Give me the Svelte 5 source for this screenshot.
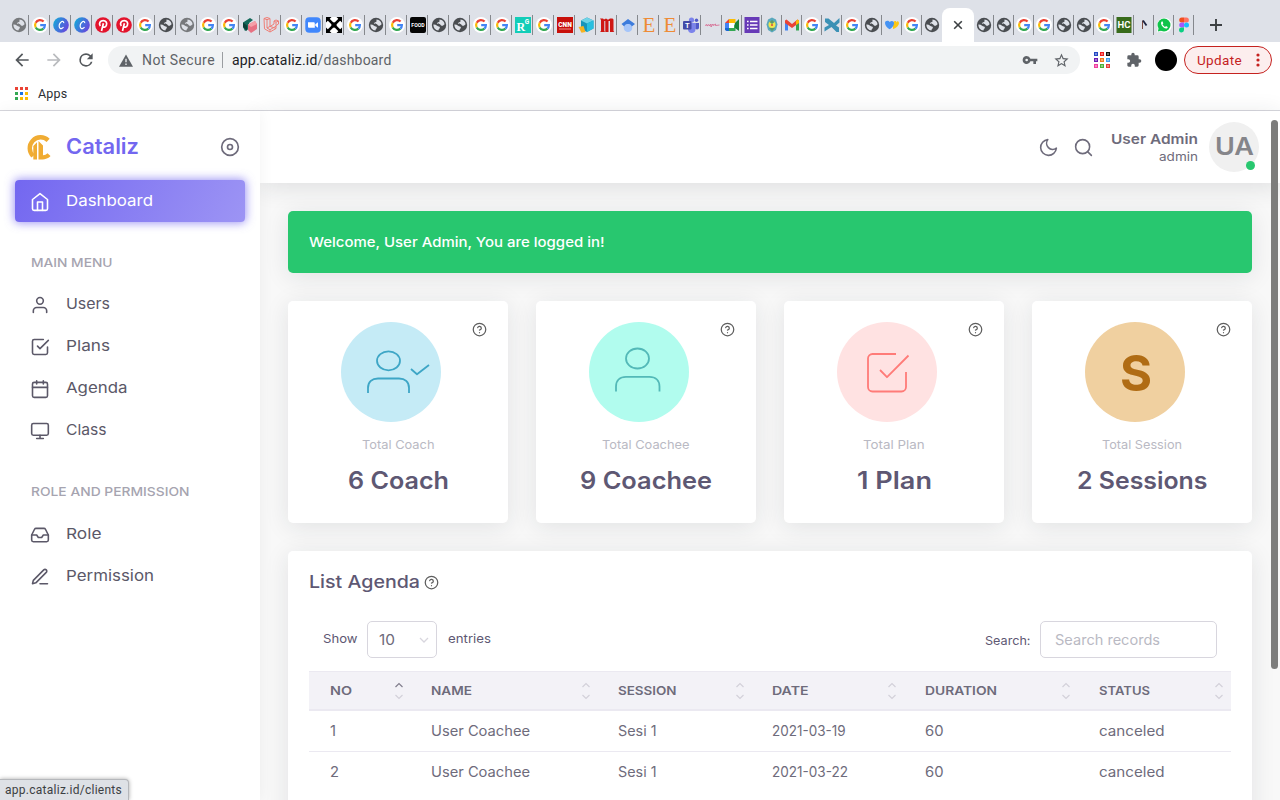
<script>
  // Letter-spaces a browser label to the given width.
  function track(node, width) {
    const natural = node.getBoundingClientRect().width;
    node.style.letterSpacing = `${(width - natural) / node.textContent.length}px`;
  }

  function fit(node, width) {
    const natural = node.getBoundingClientRect().width;
    node.style.width = `${width}px`;
    const inner = node.firstChild;
    const glyphs = document.createElement('span');
    glyphs.style.display = 'inline-block';
    glyphs.style.transformOrigin = 'left center';
    glyphs.style.transform = `scaleX(${width / natural})`;
    node.insertBefore(glyphs, inner);
    glyphs.appendChild(inner);
  }

  const wide = 'globeLight g canva canva pin pin g globe globeLight g g cube laravel g zoom cross g globe g food globe globe g g rg g cnn box m scholar etsy etsy teams script'.split(' ');
  const narrow = 'meet forms crest gmail g wave g globe hearts g globe'.split(' ');
  const after = 'globe globe g g globe globe g hc note whatsapp figma'.split(' ');

  const mainMenu = [
    { label: 'Users', icon: 'user', w: 44 },
    { label: 'Plans', icon: 'check', w: 44 },
    { label: 'Agenda', icon: 'calendar', w: 61.5 },
    { label: 'Class', icon: 'monitor', w: 40.5 }
  ];
  const roleMenu = [
    { label: 'Role', icon: 'inbox', w: 35.5 },
    { label: 'Permission', icon: 'edit', w: 88 }
  ];
  const cards = [
    { kind: 'coach', label: 'Total Coach', lw: 72.5, value: '6 Coach', vw: 101 },
    { kind: 'coachee', label: 'Total Coachee', lw: 87.5, value: '9 Coachee', vw: 132 },
    { kind: 'plan', label: 'Total Plan', lw: 61.5, value: '1 Plan', vw: 75 },
    { kind: 'session', label: 'Total Session', lw: 80, value: '2 Sessions', vw: 130.5 }
  ];
  const columns = [
    { label: 'NO', w: 22 },
    { label: 'NAME', w: 41 },
    { label: 'SESSION', w: 58.5 },
    { label: 'DATE', w: 36.5 },
    { label: 'DURATION', w: 72 },
    { label: 'STATUS', w: 51 }
  ];
  const rows = [
    [['1', 6], ['User Coachee', 99], ['Sesi 1', 38.5], ['2021-03-19', 73.5], ['60', 18.5], ['canceled', 65.5]],
    [['2', 9], ['User Coachee', 99], ['Sesi 1', 38.5], ['2021-03-22', 76], ['60', 18.5], ['canceled', 65.5]]
  ];
  const appDots = ['#ea4335', '#ea4335', '#ea4335', '#34a853', '#1a73e8', '#fbbc04', '#34a853', '#fbbc04', '#fbbc04'];
  const extDots = ['#2348c4', '#f01d1d', '#111111', '#6a1bb0', '#f07818', '#3c9cf0', '#f03ca0', '#4cb038', '#e83838'];
</script>

{#snippet fav(kind)}
  <svg class="fav" viewBox="0 0 16 16">
    {#if kind === 'g'}
      <circle cx="8" cy="8" r="8" fill="#fff" />
      <g fill="none" stroke-width="2.2">
        <path d="M11.6 4.6A4.9 4.9 0 0 0 3.7 5.7" stroke="#ea4335" />
        <path d="M3.7 5.7A4.9 4.9 0 0 0 3.7 10.4" stroke="#fbbc05" />
        <path d="M3.7 10.4A4.9 4.9 0 0 0 11.4 11.6" stroke="#34a853" />
        <path d="M11.4 11.6A4.9 4.9 0 0 0 12.9 8.2H8.2" stroke="#4285f4" />
      </g>
    {:else if kind === 'globe' || kind === 'globeLight'}
      <circle cx="8" cy="8" r="7.2" fill={kind === 'globe' ? '#4a4d51' : '#77797c'} />
      <path d="M8.6 2.4c2.8.2 4.8 2.3 5 4.9-.9.8-1.6 1.7-2.9 1.5-1.2-.2-.9-1.5-2.1-1.8-1-.2-2 .1-2.8-.7.7-1.2 2.2-.7 2.7-1.8.3-.8-.4-1.2.1-2.1zM2.4 7.6c1.5-.1 2.6.3 3.7 1.1 1 .8 2.7.3 2.8 1.7.1 1.2-1.4 1.1-1.5 3.2-2.9-.2-5.1-2.8-5-6z" fill="#dee1e8" />
    {:else if kind === 'canva'}
      <defs><linearGradient id="cv" x1="0" y1=".3" x2="1" y2=".8"><stop stop-color="#18a5d8" /><stop offset="1" stop-color="#6d3fdd" /></linearGradient></defs>
      <circle cx="8" cy="8" r="7.8" fill="url(#cv)" />
      <path d="M10.7 6.2c.3-1.6-1.2-2.3-2.6-1.3C6 6.3 5.500 10 7 11.200c1.100.9 2.600.1 3.500-1.200" fill="none" stroke="#fff" stroke-width="1.2" />
    {:else if kind === 'pin'}
      <circle cx="8" cy="8" r="7.8" fill="#e3142d" />
      <path d="M5.300 9c-2-2.800.1-5.300 2.900-5.300 2.700 0 4.100 2.100 3.200 4.500-.9 2.300-3.100 2.300-3.600 1M8.400 6.300L6.500 14" fill="none" stroke="#fff" stroke-width="1.7" />
    {:else if kind === 'cube'}
      <path d="M1 5.500L8 1l3 2-4 3v6L3 14 1 10z" fill="#14695a" /><path d="M1 5.500l4 3V14L1 10z" fill="#0d4039" />
      <path d="M6 7.500L13 4l2 3v5l-6 4-3-3z" fill="#e77283" /><path d="M6 7.500L13 4l2 3-6 3z" fill="#f5a0a8" />
    {:else if kind === 'laravel'}
      <path d="M1 1.500l3-1 3 1v8l4-2.500V4l2-1 2.500 1v3L13 8.500v3L7 15l-5.500-3.200zM1 1.500l3 1.200V11l3 1.700 6-3.500M4 2.700l3-1.200M11 4l2 1.200L15.500 4M13 5.200v3.300M4 11l3-1.600 6 2M7 12.700V15" fill="none" stroke="#ef7e76" stroke-width="1" />
    {:else if kind === 'zoom'}
      <rect x=".3" y=".3" width="15.4" height="15.4" rx="4" fill="#4087fc" />
      <path d="M3 5.300h5.500c.8 0 1.300.5 1.300 1.300v4.100H4.300C3.500 10.700 3 10.200 3 9.400zM10.300 7.300L13 5.300v5.400l-2.700-2z" fill="#fff" />
    {:else if kind === 'cross'}
      <path d="M0 0h16v16H0z" fill="#fff" />
      <path d="M2 2l12 12M14 2L2 14" stroke="#000" stroke-width="2.5" /><path d="M0 0h5.500L0 5.500zM16 0v5.500L10.500 0zM0 16v-5.500L5.500 16zM16 16h-5.500l5.500-5.500zM8 5l3 3-3 3-3-3z" />
    {:else if kind === 'food'}
      <rect width="16" height="16" rx="2" fill="#050505" />
      <text x="8" y="10" font-size="5.2" font-weight="700" text-anchor="middle" fill="#fff">FOOD</text>
    {:else if kind === 'rg'}
      <path d="M0 0h16v16H0z" fill="#12cdb8" />
      <text class="serif" x="1.5" y="13.5" font-size="12" font-weight="700" fill="#fff">R</text><text x="9.7" y="7" font-size="6.5" font-weight="700" fill="#fff">G</text>
    {:else if kind === 'cnn'}
      <path d="M0 0h16v16H0z" fill="#c80f0a" />
      <text x="8" y="9.7" font-size="7.4" font-weight="900" text-anchor="middle" textLength="13.5" lengthAdjust="spacingAndGlyphs" fill="#fff">CNN</text><path d="M2 12h12" stroke="#ee8c86" stroke-width="1" />
    {:else if kind === 'box'}
      <path d="M3 3.500L9 .5l6.500 3v8L9 15l-6-3z" fill="#1795ba" /><path d="M3 3.500L9 .5l6.500 3L9 6.500z" fill="#6fd3e6" /><path d="M9 6.500l6.500-3v8L9 15z" fill="#28bfe0" /><path d="M.5 10l5-1 2 6-4 .8z" fill="#f7b320" />
    {:else if kind === 'm'}
      <path d="M1 1.500h3l1 1 2-1 2 1.300 2-1.300h2.500l1 1v11.500l.8 1H11V4H9.500v11H6.300V4h-1v10l.8 1H1l1-1V3z" fill="#cf1713" />
    {:else if kind === 'scholar'}
      <circle cx="8" cy="10.8" r="4.3" fill="#a5c5fa" /><path d="M8 2l7 5-3.200 2.500C11 7.500 9.700 7 8 7S5 7.500 4.200 9.500L1.500 7z" fill="#3c7bdc" />
    {:else if kind === 'etsy'}
      <text class="serif" x="8" y="15" font-size="21" text-anchor="middle" fill="#ee8b35">E</text>
    {:else if kind === 'teams'}
      <circle cx="8.5" cy="3" r="2.6" fill="#7b83eb" /><circle cx="13.5" cy="3.3" r="1.7" fill="#5059c9" /><path d="M5 6h7.500v6a3.800 3.800 0 0 1-7.500 1z" fill="#7b83eb" /><path d="M12.500 6H16v4.500c0 2-2 2.500-3.500 1.500z" fill="#5059c9" />
      <rect y="4" width="8.5" height="8.5" rx="1" fill="#444ba8" /><text x="4.25" y="11" font-size="7.5" font-weight="700" text-anchor="middle" fill="#fff">T</text>
    {:else if kind === 'script'}
      <path d="M1 8.500l2-1v1.500l2-1.500.5 1.500L7 7v3l2-3 .5 1.500 2-1.500v1.500l4-.5" fill="none" stroke="#d6628c" stroke-width=".8" />
    {:else if kind === 'meet'}
      <path d="M1 6l4-4v4z" fill="#ea4335" /><path d="M5 2h6.500v4H5z" fill="#fbbc04" /><path d="M1 6h4v5H1z" fill="#4285f4" /><path d="M1 11h4v3H2.500L1 13z" fill="#1967d2" /><path d="M5 11h3.500l3-5v8H5z" fill="#34a853" /><path d="M11 6l4-4v12l-4-3z" fill="#188038" /><path d="M5 6h5v5H5z" fill="#fff" />
    {:else if kind === 'forms'}
      <path d="M.5 0h15v16H.5z" fill="#673ab7" /><path d="M6 4.500h7.500M6 8h7.500M6 11.500h7.500M3 4.500h1.600M3 8h1.600M3 11.500h1.600" stroke="#fff" stroke-width="1.7" />
    {:else if kind === 'crest'}
      <path d="M8 .5l4 2 1.500 5L12 13l-4 2.500L4 13 2.500 7.500 4 2.500z" fill="#5aa8bc" /><circle cx="8" cy="7.5" r="3.5" fill="#f2e74b" /><path d="M5.500 5l2.500-2 2.500 2L8 7zM5 11h6l-3 3z" fill="#5b9a6a" /><circle cx="8" cy="8" r="1.1" fill="#d95643" />
    {:else if kind === 'gmail'}
      <path d="M1 4v9.500h3V7z" fill="#4285f4" /><path d="M15 4v9.500h-3V7z" fill="#34a853" /><path d="M1 3.500l1.500-1L8 7l5.500-4.500 1.500 1V6l-7 5-7-5z" fill="#ea4335" /><path d="M12 4l1.500-1.500L15 3.500V6l-3 2z" fill="#fbbc04" />
    {:else if kind === 'wave'}
      <path d="M1 1.500h3.500L10 6l5.500-5v4.500L12 8.500l3 2V15h-2.500L7.500 10 .5 14.500v-4L5 8 1 5z" fill="#3b91b5" />
    {:else if kind === 'hearts'}
      <path d="M9 6.500C9 4 12 3 12.500 5.500 13 3 16 4.500 14.700 7.500 13.500 10 11 11.500 9 12z" fill="#fbc716" /><path d="M1 6c0-2.500 3.500-3 4.700-1C7.500 3 10.500 4 10 7c-.5 2.500-2.700 4.500-4.500 5.300C3 11 1 8.500 1 6z" fill="#4593f3" />
    {:else if kind === 'hc'}
      <path d="M.5 0h15v16H.5z" fill="#386b1b" /><text x="8" y="11" font-size="9.5" font-weight="700" text-anchor="middle" fill="#fff">HC</text>
    {:else if kind === 'note'}
      <path d="M6.500 3.500V12" stroke="#7a4a3f" stroke-width="1" /><path d="M7 3.500l3.500 5" stroke="#1d2340" stroke-width="1.8" />
    {:else if kind === 'whatsapp'}
      <path d="M.8 15.500l1-4A7.400 7.400 0 1 1 4.500 14.500z" fill="#fff" /><circle cx="8" cy="8" r="6.5" fill="#10c34a" /><path d="M1.800 14.500l1-4 3 3z" fill="#10c34a" />
      <path d="M5.700 4.500c-2 1.500.8 6.800 4.500 7 1 0 1.700-.9 1.500-1.600l-1.700-.9-.9.9C8 9.400 7 8.500 6.500 7.300l.8-.9-.6-1.800z" fill="#fff" />
    {:else if kind === 'figma'}
      <path d="M8 .5H5.700a2.500 2.500 0 0 0 0 5H8z" fill="#f24e1e" /><path d="M8 .5h2.400a2.500 2.500 0 0 1 0 5H8z" fill="#ff7262" /><path d="M8 5.500H5.700a2.500 2.500 0 0 0 0 5H8z" fill="#a259ff" /><circle cx="10.5" cy="8" r="2.5" fill="#1abcfe" /><path d="M8 10.500H5.700A2.500 2.500 0 1 0 8 13z" fill="#0acf83" />
    {/if}
  </svg>
{/snippet}

{#snippet icon(kind)}
  <svg class="feather" viewBox="0 0 24 24">
    {#if kind === 'home'}
      <path d="M3 9l9-7 9 7v11a2 2 0 0 1-2 2H5a2 2 0 0 1-2-2z" /><path d="M9 22V12h6v10" />
    {:else if kind === 'user'}
      <path d="M20 21v-2a4 4 0 0 0-4-4H8a4 4 0 0 0-4 4v2" /><circle cx="12" cy="7" r="4" />
    {:else if kind === 'check'}
      <path d="M9 11l3 3L22 4" /><path d="M21 12v7a2 2 0 0 1-2 2H5a2 2 0 0 1-2-2V5a2 2 0 0 1 2-2h11" />
    {:else if kind === 'calendar'}
      <rect x="3" y="4" width="18" height="18" rx="2" /><path d="M16 2v4M8 2v4M3 10h18" />
    {:else if kind === 'monitor'}
      <rect x="2" y="3" width="20" height="14" rx="2" /><path d="M8 21h8M12 17v4" />
    {:else if kind === 'inbox'}
      <path d="M22 12h-6l-2 3h-4l-2-3H2" /><path d="M5.450 5.110L2 12v6a2 2 0 0 0 2 2h16a2 2 0 0 0 2-2v-6l-3.450-6.890A2 2 0 0 0 16.760 4H7.240a2 2 0 0 0-1.790 1.110z" />
    {:else if kind === 'edit'}
      <path d="M12 20h9M16.500 3.500a2.121 2.121 0 0 1 3 3L7 19l-4 1 1-4L16.500 3.500z" />
    {:else if kind === 'disc'}
      <circle cx="12" cy="12" r="10" /><circle cx="12" cy="12" r="3" />
    {:else if kind === 'moon'}
      <path d="M21 12.790A9 9 0 1 1 11.210 3 7 7 0 0 0 21 12.790z" />
    {:else if kind === 'search'}
      <circle cx="11" cy="11" r="8" /><path d="M21 21l-4.350-4.350" />
    {:else if kind === 'help'}
      <circle cx="12" cy="12" r="10" /><path d="M9.090 9a3 3 0 0 1 5.830 1c0 2-3 3-3 3M12 17h.01" />
    {/if}
  </svg>
{/snippet}

{#snippet menuItem(item)}
  <a class="item" href="#top">{@render icon(item.icon)}<span class="text" use:fit={item.w}>{item.label}</span></a>
{/snippet}

<div class="window">
  <header class="chrome">
    <div class="tabs">
      {#each wide as t}<div class="tab w21">{@render fav(t)}</div>{/each}
      {#each narrow as t, i}<div class="tab" class:bare={i === narrow.length - 1}>{@render fav(t)}</div>{/each}
      <div class="active"><svg viewBox="0 0 10 10"><path d="M1.200 1.200l7.600 7.600M8.800 1.200L1.200 8.800" /></svg></div>
      {#each after as t}<div class="tab">{@render fav(t)}</div>{/each}
      <svg class="plus" viewBox="0 0 14 14"><path d="M7 1v12M1 7h12" /></svg>
    </div>
    <div class="toolbar">
      <svg class="nav" viewBox="0 0 24 24"><path d="M20 11H7.830l5.590-5.590L12 4l-8 8 8 8 1.410-1.410L7.830 13H20z" /></svg>
      <svg class="nav dim" viewBox="0 0 24 24"><path d="M4 11h12.170l-5.590-5.590L12 4l8 8-8 8-1.410-1.410L16.170 13H4z" /></svg>
      <svg class="nav" viewBox="0 0 24 24"><path d="M17.650 6.350A7.958 7.958 0 0 0 12 4a8 8 0 1 0 7.730 10h-2.080A6 6 0 1 1 12 6c1.660 0 3.140.69 4.220 1.780L13 11h7V4z" /></svg>
      <div class="omnibox">
        <svg class="warn" viewBox="0 0 16 14"><path d="M8 0L0 14h16z" /><path d="M8 5v4M8 10.500v1.700" stroke="#f1f3f4" stroke-width="1.5" /></svg>
        <span class="grey" use:track={73}>Not Secure</span>
        <i></i>
        <span class="url" use:track={159.5}>app.cataliz.id<b>/dashboard</b></span>
        <svg class="key" viewBox="0 0 24 24"><path d="M12.650 10A5.990 5.990 0 0 0 7 6a6 6 0 1 0 5.650 8H17v4h4v-4h2v-4H12.650zM7 14a2 2 0 1 1 0-4 2 2 0 0 1 0 4z" /></svg>
        <svg class="star" viewBox="0 0 24 24"><path d="M22 9.240l-7.190-.62L12 2 9.190 8.630 2 9.240l5.460 4.730L5.820 21 12 17.270 18.180 21l-1.630-7.030zM12 15.400l-3.760 2.270 1-4.280-3.320-2.880 4.380-.38L12 6.100l1.710 4.040 4.380.38-3.320 2.880 1 4.280z" /></svg>
      </div>
      <svg class="ext" viewBox="0 0 16 16">
        {#each extDots as c, i}<rect x={(i % 3) * 6} y={Math.floor(i / 3) * 6} width="4" height="4" fill={c} /><rect x={(i % 3) * 6 + 1.2} y={Math.floor(i / 3) * 6 + 1.2} width="1.6" height="1.6" fill="#fff" opacity=".6" />{/each}
      </svg>
      <svg class="puzzle" viewBox="0 0 24 24"><path d="M20.500 11H19V7a2 2 0 0 0-2-2h-4V3.500a2.500 2.500 0 0 0-5 0V5H4a2 2 0 0 0-2 2v3.800h1.500a2.700 2.700 0 0 1 0 5.400H2V20c0 1.100.9 2 2 2h3.800v-1.500a2.700 2.700 0 0 1 5.400 0V22H17a2 2 0 0 0 2-2v-4h1.500a2.500 2.500 0 0 0 0-5z" /></svg>
      <div class="profile"></div>
      <div class="update"><span use:track={45}>Update</span><svg viewBox="0 0 4 14"><circle cx="2" cy="2" r="1.6" /><circle cx="2" cy="7" r="1.6" /><circle cx="2" cy="12" r="1.6" /></svg></div>
    </div>
    <div class="bookmarks">
      <svg viewBox="0 0 13 13">{#each appDots as c, i}<rect x={(i % 3) * 5} y={Math.floor(i / 3) * 5} width="3" height="3" fill={c} />{/each}</svg>
      <span use:track={29.5}>Apps</span>
    </div>
  </header>

  <div class="app">
    <aside>
      <div class="brand">
        <svg class="logo" viewBox="0 0 25 26">
          <path d="M22.600 6.300A10.300 10.300 0 1 0 7.600 22" fill="none" stroke="#f0ac33" stroke-width="4.4" />
          <path d="M7.800 25.500V12L11.500 8.300V25.500zM13 25.500V7l4.500 4.500v9.800c1.800 0 3.300-.7 4.500-2l3 2.600c-2.300 2.700-5.500 3.600-12 3.600z" fill="#f0ac33" />
        </svg>
        <strong use:fit={73}>Cataliz</strong>
        {@render icon('disc')}
      </div>
      <a class="item current" href="#top">{@render icon('home')}<span class="text" use:fit={87}>Dashboard</span></a>
      <h6><span use:fit={81.5}>MAIN MENU</span></h6>
      {#each mainMenu as item}{@render menuItem(item)}{/each}
      <h6 class="second"><span use:fit={158.5}>ROLE AND PERMISSION</span></h6>
      {#each roleMenu as item}{@render menuItem(item)}{/each}
    </aside>

    <div class="page">
      <nav>
        {@render icon('moon')}
        {@render icon('search')}
        <div class="who"><b use:fit={87}>User Admin</b><small use:fit={39}>admin</small></div>
        <div class="avatar"><span use:fit={39}>UA</span><i></i></div>
      </nav>
      <main>
        <div class="alert"><span use:fit={295.5}>Welcome, User Admin, You are logged in!</span></div>
        <div class="cards">
          {#each cards as c}
            <section class="card">
              <div class="top">
                <div class="disc {c.kind}">
                  {#if c.kind === 'coach'}
                    <svg viewBox="0 0 100 100"><ellipse cx="47.5" cy="38.8" rx="11.5" ry="9.5" /><path d="M27 71v-5c0-6 4-9.500 10-9.500h21c6 0 10 3.500 10 9.500v5M70 47l6 5.200L88 43" /></svg>
                  {:else if c.kind === 'coachee'}
                    <svg viewBox="0 0 100 100"><ellipse cx="48.5" cy="36.5" rx="11.5" ry="10" /><path d="M27 69.500v-5c0-6 4-9.700 10-9.700h23.500c6 0 10 3.700 10 9.700v5" /></svg>
                  {:else if c.kind === 'plan'}
                    <svg viewBox="0 0 100 100"><path d="M59 32H35.500a4.500 4.500 0 0 0-4.500 4.500v28.500a4.500 4.500 0 0 0 4.500 4.500H64.500a4.500 4.500 0 0 0 4.500-4.500V50M43 48l7 7.200L71.500 33.500" /></svg>
                  {:else}
                    <span>S</span>
                  {/if}
                </div>
                {@render icon('help')}
              </div>
              <p><span use:fit={c.lw}>{c.label}</span></p>
              <h2><span use:fit={c.vw}>{c.value}</span></h2>
            </section>
          {/each}
        </div>

        <section class="card agenda">
          <h4><span use:fit={111}>List Agenda</span>{@render icon('help')}</h4>
          <div class="controls">
            <span class="lbl" use:fit={34.5}>Show</span>
            <div class="select"><span use:fit={16}>10</span><svg viewBox="0 0 10 6"><path d="M1 1l4 4 4-4" /></svg></div>
            <span class="lbl" use:fit={43}>entries</span>
            <span class="lbl search-lbl" use:fit={45.5}>Search:</span>
            <div class="search"><span use:fit={105}>Search records</span></div>
          </div>
          <div class="row head">
            {#each columns as col, i}
              <div><span use:fit={col.w}>{col.label}</span>
                <svg class="sort" viewBox="0 0 10 18"><path class:on={i === 0} d="M1.500 5L5 1.500 8.500 5" /><path d="M1.500 13L5 16.500 8.500 13" /></svg>
              </div>
            {/each}
          </div>
          {#each rows as r, i}
            <div class="row" class:last={i === rows.length - 1}>{#each r as [text, w]}<div><span use:fit={w}>{text}</span></div>{/each}</div>
          {/each}
        </section>
      </main>
    </div>
  </div>
  <div class="scrollbar"></div>
  <div class="status"><span use:track={117}>app.cataliz.id/clients</span></div>
</div>

<style>
  :global(body) { margin: 0; overflow: hidden; }
  .window { position: relative; width: 1280px; height: 800px; overflow: hidden; display: flex; flex-direction: column; background: #fff; font-family: Inter, sans-serif; color: #6e6b7b; }
  .window * { box-sizing: border-box; }
  span, strong, b, small { display: inline-block; white-space: nowrap; text-align: left; }
  svg { display: block; flex: none; }
  .chrome { height: 111px; border-bottom: 1px solid #d7d7dd; font-family: Roboto, sans-serif; flex: none; }
  .tabs { height: 42px; background: #dee1e8; display: flex; align-items: flex-end; padding-left: 8px; }
  .tab { width: 20px; height: 34px; display: flex; align-items: center; justify-content: center; position: relative; flex: none; }
  .tab.w21 { width: 21px; }
  .tab::after { content: ''; position: absolute; right: 0; top: 7px; width: 1px; height: 20px; background: #85888d; }
  .tab.bare::after { display: none; }
  .fav { width: 16px; height: 16px; overflow: visible; }
  .fav text { font-family: Roboto, sans-serif; }
  .fav text.serif { font-family: "Liberation Serif", serif; }
  .active { width: 32px; height: 34px; background: #fff; border-radius: 8px 8px 0 0; display: flex; align-items: center; justify-content: center; flex: none; }
  .active svg { width: 10px; }
  .active path, .plus path { stroke: #3c4043; stroke-width: 1.6; fill: none; }
  .plus { width: 14px; margin: 0 0 10px 15px; }
  .plus path { stroke-width: 1.9; }
  .toolbar { height: 36px; display: flex; align-items: center; padding: 0 8px 0 12px; }
  .nav { width: 20px; height: 20px; fill: #54585c; margin-right: 12px; }
  .nav.dim { fill: #b9bbbe; }
  .omnibox { width: 972px; height: 28px; background: #f1f3f4; border-radius: 14px; display: flex; align-items: center; padding-left: 11px; font-size: 14px; color: #202124; }
  .grey, .url b { color: #5f6368; }
  .url b { font-weight: 400; display: inline; }
  .warn { width: 14px; height: 13px; fill: #5f6368; margin-right: 9px; }
  .omnibox i { width: 1px; height: 16px; background: #9a9da1; margin: 0 9px 0 7px; }
  .key { width: 16px; fill: #5f6368; margin-left: auto; margin-right: 15px; }
  .star { width: 17px; fill: #5f6368; margin-right: 10px; }
  .ext { width: 16px; margin-left: 14px; }
  .puzzle { width: 16px; fill: #5f6368; margin-left: 16px; }
  .profile { width: 22px; height: 22px; border-radius: 50%; background: #000; margin: 0 7px 0 13px; flex: none; }
  .update { width: 88px; height: 28px; border: 1px solid #c5221f; border-radius: 14px; background: #fceeee; color: #c5221f; display: flex; align-items: center; justify-content: space-between; padding: 0 11px 0 12px; font-size: 13.5px; flex: none; }
  .update svg { width: 4px; fill: #c5221f; }
  .bookmarks { height: 30px; display: flex; align-items: center; padding-left: 15px; gap: 10px; font-size: 12.5px; color: #2b2e32; }
  .bookmarks svg { width: 13px; }
  .feather { width: 20px; height: 20px; fill: none; stroke: currentColor; stroke-width: 2; stroke-linecap: round; stroke-linejoin: round; }

  .app { display: flex; flex: 1; min-height: 0; }
  aside { width: 260px; background: #fff; padding: 0 15px; box-shadow: 0 0 15px rgba(34, 41, 47, .05); z-index: 2; flex: none; }
  .brand { height: 69px; display: flex; align-items: center; padding: 3px 5px 0 10px; }
  .logo { width: 26px; height: 26px; }
  .brand strong { font-size: 21px; font-weight: 600; color: #7367f0; margin: -2px 0 0 15px; }
  .brand .feather { margin-left: auto; }
  .item { height: 42px; display: flex; align-items: center; gap: 16px; padding-left: 15px; font-size: 15px; color: #5b5868; text-decoration: none; }
  .item .text { margin-top: -1px; }
  .item .feather { margin-top: 2px; stroke-width: 1.9; }
  .item.current { color: #fff; background: linear-gradient(118deg, #7367f0, rgba(115, 103, 240, .7)); border-radius: 4px; box-shadow: 0 0 10px 1px rgba(115, 103, 240, .7); }
  h6 { margin: 0; padding: 32px 16px 0; height: 61px; font-size: 12.2px; line-height: 18px; font-weight: 500; color: #a6a4b0; }
  h6.second { height: 62px; }

  .page { flex: 1; background: #f8f8f8; min-width: 0; }
  nav { height: 72px; background: #fff; box-shadow: 0 4px 24px rgba(34, 41, 47, .12); display: flex; align-items: center; justify-content: flex-end; padding-right: 21px; position: relative; }
  nav .feather { width: 21px; height: 21px; margin-right: 14px; stroke-width: 1.8; }
  .who { display: flex; flex-direction: column; align-items: flex-end; margin: 0 11px 0 3px; }
  .who b { font-size: 13.7px; font-weight: 600; line-height: 18px; }
  .who small { font-size: 12px; line-height: 17px; }
  .avatar { width: 50px; height: 50px; border-radius: 50%; background: #f0f0f0; display: flex; align-items: center; justify-content: center; font-size: 24px; font-weight: 600; color: #85858a; position: relative; }
  .avatar span { margin-top: -2px; }
  .avatar i { position: absolute; right: 4px; bottom: 2px; width: 9px; height: 9px; border-radius: 50%; background: #28c76f; }
  main { padding: 28px; }
  .alert { height: 62px; border-radius: 5px; background: #28c76f; color: #fff; font-size: 13.6px; font-weight: 500; display: flex; align-items: center; padding-left: 21px; box-shadow: 0 4px 24px rgba(34, 41, 47, .1); }
  .cards { display: grid; grid-template-columns: repeat(4, 220px); gap: 28px; margin: 28px 0; }
  .card { background: #fff; border-radius: 5px; box-shadow: 0 4px 24px rgba(34, 41, 47, .1); padding: 21px; }
  .cards .card { height: 222px; text-align: center; }
  .top { display: flex; justify-content: space-between; padding-left: 32px; height: 100px; }
  .top .feather, h4 .feather { width: 15px; height: 15px; color: #5e5e5e; }
  .disc { width: 100px; height: 100px; border-radius: 50%; display: flex; align-items: center; justify-content: center; }
  .disc svg { width: 100px; fill: none; stroke-width: 1.8; stroke-linejoin: round; }
  .coach { background: #c5ebf6; stroke: #3ea6c6; }
  .coachee { background: #b1fcee; stroke: #53b9b8; }
  .plan { background: #ffe2e2; stroke: #ff7b78; }
  .session { background: #f0d0a0; color: #b06c14; font-weight: 700; font-size: 49px; }
  .session span { margin: 2px 0 0 2px; }
  .cards p { margin: 13px 0 0; font-size: 12px; line-height: 20px; color: #b9b9c3; }
  h2 { margin: 11px 0 0; font-size: 24px; line-height: 30px; font-weight: 600; color: #5e5873; }
  .agenda { height: 300px; }
  h4 { margin: 0; font-size: 17.6px; line-height: 20px; font-weight: 500; color: #5e5873; display: flex; align-items: center; gap: 4px; }
  .controls { display: flex; align-items: center; height: 37px; margin: 29px 14px 13px; color: #5e5873; }
  .lbl { font-size: 12.2px; margin-top: -3px; }
  .select { width: 70px; height: 37px; border: 1px solid #d8d6de; border-radius: 5px; margin: 0 11px 0 9.5px; display: flex; align-items: center; justify-content: space-between; padding: 0 7px 0 11px; font-size: 14px; color: #6e6b7b; }
  .select svg { width: 10px; fill: none; stroke: #d8d6de; stroke-width: 1.3; }
  .search-lbl { margin: 1px 10px 0 auto; }
  .search { width: 177px; height: 37px; border: 1px solid #d8d6de; border-radius: 5px; display: flex; align-items: center; padding-left: 14px; font-size: 14px; color: #b9b9c3; }
  .row { display: grid; grid-template-columns: 101.5px 187px 154px 152.5px 174px 153px; height: 41px; border-bottom: 1px solid #ebe9f1; font-size: 13.8px; }
  .row.last { border-bottom-color: transparent; }
  .row > div { padding-left: 20.5px; display: flex; align-items: center; justify-content: space-between; }
  .head { height: 40px; border-top: 1px solid #ebe9f1; border-bottom: 2px solid #ebe9f1; background: #f3f2f7; font-size: 11.8px; font-weight: 600; }
  .sort { width: 10px; height: 18px; margin-right: 7px; fill: none; stroke: #d3d1da; stroke-width: 1.2; }
  .sort .on { stroke: #817e8d; }
  .scrollbar { position: absolute; right: 2px; top: 120px; width: 7px; height: 549px; border-radius: 4px; background: #7d7d7c; z-index: 5; }
  .status { position: absolute; left: 0; bottom: 0; width: 129px; height: 21px; background: #dee1e6; border: 1px solid #b5b7bb; border-left: 0; border-bottom: 0; border-radius: 0 4px 0 0; box-shadow: 0 0 4px rgba(0, 0, 0, .35); padding-left: 5px; font: 12px/20px Roboto, sans-serif; color: #3c4043; z-index: 6; }
</style>
